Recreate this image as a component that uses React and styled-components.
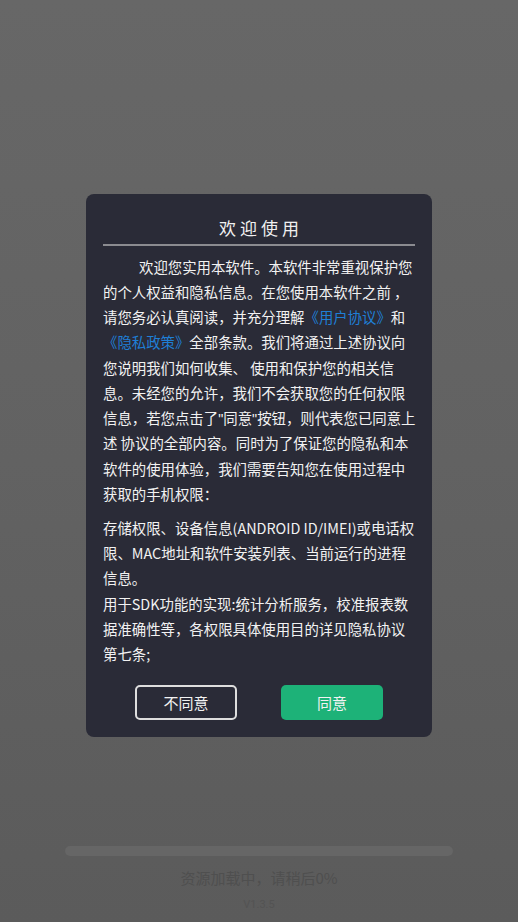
import React from 'react';
import styled, {createGlobalStyle} from 'styled-components';

const GlobalStyle = createGlobalStyle`
  html, body {
    margin: 0;
    padding: 0;
    height: 100%;
  }
  body {
    font-family: "Noto Sans CJK SC", "Noto Sans", sans-serif;
  }
  #root {
    height: 100%;
  }
`

// loading page underneath the dialog
const Page = styled.div`
  height: 922px;
  box-sizing: border-box;
  background: linear-gradient(180deg, #676767 0%, #626262 50%, #5b5b5b 100%);
  display: flex;
  flex-direction: column;
  justify-content: flex-end;
  align-items: center;
  padding: 0 65px 10px;
`

const ProgressTrack = styled.div`
  width: 100%;
  height: 10px;
  border-radius: 5px;
  background: #666666;
`

const LoadingText = styled.div`
  margin-top: 12px;
  font-size: 15px;
  line-height: 20px;
  color: #4f4f4f;
`

const VersionText = styled.div`
  margin-top: 10px;
  font-family: "Roboto", "Noto Sans", sans-serif;
  font-size: 11px;
  line-height: 14px;
  color: #535353;
`

// modal
const Overlay = styled.div`
  position: fixed;
  inset: 0;
  display: flex;
  align-items: center;
  justify-content: center;
  padding-top: 9px;
`

const Dialog = styled.div`
  width: 346px;
  box-sizing: border-box;
  background: #2a2b37;
  border-radius: 8px;
  padding: 23px 17px 17px;
  color: #f2f2f2;
`

const Title = styled.div`
  text-align: center;
  font-size: 17px;
  line-height: 22px;
  letter-spacing: 4px;
  padding-left: 4px;
  color: #f0f0f0;
`

const Divider = styled.div`
  height: 2px;
  background: #8b8b90;
  margin-top: 5px;
  margin-bottom: 8px;
`

const Body = styled.div`
  margin-right: -3px;
`

const Paragraph = styled.p`
  margin: 0 0 ${p => p.$gap || 0}px;
  font-size: 14.4px;
  line-height: 25.2px;
  text-indent: ${p => p.$indent ? '36px' : '0'};
  color: #f2f2f2;
`

const Link = styled.span`
  color: #1f7fd6;
`

// the quotes in the original are narrow ones
const Quote = styled.span`
  font-family: "Liberation Sans", sans-serif;
  line-height: 1;
`

const ButtonRow = styled.div`
  display: flex;
  justify-content: center;
  gap: 44px;
  margin-top: 19px;
`

const Button = styled.button`
  width: 102px;
  height: 35px;
  box-sizing: border-box;
  border-radius: 5px;
  font-family: inherit;
  font-size: 15px;
  color: #f2f2f2;
  border: ${p => p.$primary ? 'none' : '2px solid #dedede'};
  background: ${p => p.$primary ? '#1db278' : 'transparent'};
  padding: 0;
`

export default function App() {
  return <>
    <GlobalStyle/>
    <Page>
      <ProgressTrack/>
      <LoadingText>资源加载中，请稍后0%</LoadingText>
      <VersionText>V1.3.5</VersionText>
    </Page>
    <Overlay>
      <Dialog>
        <Title>欢迎使用</Title>
        <Divider/>
        <Body>
          <Paragraph $indent $gap={9}>
            欢迎您实用本软件。本软件非常重视保护您的个人权益和隐私信息。在您使用本软件之前 ，请您务必认真阅读，并充分理解<Link>《用户协议》</Link>和<Link>《隐私政策》</Link>全部条款。我们将通过上述协议向您说明我们如何收集、 使用和保护您的相关信息。未经您的允许，我们不会获取您的任何权限信息，若您点击了<Quote>"</Quote>同意<Quote>"</Quote>按钮，则代表您已同意上述 协议的全部内容。同时为了保证您的隐私和本软件的使用体验，我们需要告知您在使用过程中获取的手机权限：
          </Paragraph>
          <Paragraph>
            存储权限、设备信息(ANDROID ID/IMEI)或电话权限、MAC地址和软件安装列表、当前运行的进程信息。
          </Paragraph>
          <Paragraph>
            用于SDK功能的实现:统计分析服务，校准报表数据准确性等，各权限具体使用目的详见隐私协议第七条;
          </Paragraph>
        </Body>
        <ButtonRow>
          <Button>不同意</Button>
          <Button $primary>同意</Button>
        </ButtonRow>
      </Dialog>
    </Overlay>
  </>
}
